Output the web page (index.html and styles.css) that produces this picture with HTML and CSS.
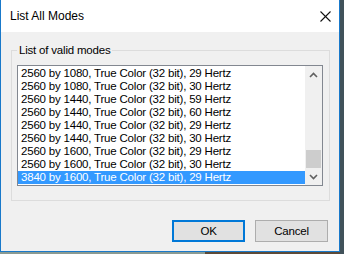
FILE: index.html
```html
<!DOCTYPE html>
<html lang="en">
<head>
  <meta charset="UTF-8">
  <meta name="viewport" content="width=device-width, initial-scale=1.0">
  <title>List All Modes</title>
  <link rel="stylesheet" href="styles.css">
</head>
<body>
  <div class="window">
    <div class="titlebar">
      <span class="title">List All Modes</span>
      <svg class="close" width="11" height="11" viewBox="0 0 11 11">
        <line x1="0.5" y1="0.5" x2="10.5" y2="10.5" stroke="#111" stroke-width="1.1"/>
        <line x1="10.5" y1="0.5" x2="0.5" y2="10.5" stroke="#111" stroke-width="1.1"/>
      </svg>
    </div>
    <div class="client">
      <fieldset class="group">
        <legend>List of valid modes</legend>
        <div class="listbox">
          <ul class="items">
            <li>2560 by 1080, True Color (32 bit), 29 Hertz</li>
            <li>2560 by 1080, True Color (32 bit), 30 Hertz</li>
            <li>2560 by 1440, True Color (32 bit), 59 Hertz</li>
            <li>2560 by 1440, True Color (32 bit), 60 Hertz</li>
            <li>2560 by 1440, True Color (32 bit), 29 Hertz</li>
            <li>2560 by 1440, True Color (32 bit), 30 Hertz</li>
            <li>2560 by 1600, True Color (32 bit), 29 Hertz</li>
            <li>2560 by 1600, True Color (32 bit), 30 Hertz</li>
            <li class="selected">3840 by 1600, True Color (32 bit), 29 Hertz</li>
          </ul>
          <div class="scrollbar">
            <div class="arrow">
              <svg width="9" height="6" viewBox="0 0 9 6"><polyline points="1,5 4.5,1.5 8,5" fill="none" stroke="#606060" stroke-width="1.6"/></svg>
            </div>
            <div class="track"><div class="thumb"></div></div>
            <div class="arrow">
              <svg width="9" height="6" viewBox="0 0 9 6"><polyline points="1,1 4.5,4.5 8,1" fill="none" stroke="#606060" stroke-width="1.6"/></svg>
            </div>
          </div>
        </div>
      </fieldset>
      <div class="buttons">
        <button class="btn default">OK</button>
        <button class="btn">Cancel</button>
      </div>
    </div>
  </div>
</body>
</html>
```
FILE: styles.css
```css
body { margin: 0; width: 344px; height: 254px; overflow: hidden; font-family: "Liberation Sans", Arial, sans-serif; font-size: 12px; color: #000; background: linear-gradient(to right, #8a9a92 0 205px, #5c4a38 205px 340px, #41525a 340px); }
.window { box-sizing: border-box; width: 340px; height: 252px; border: 1px solid #1979ca; border-top: none; background: #f0f0f0; display: flex; flex-direction: column; }
.titlebar { height: 32px; flex: none; background: #fff; display: flex; align-items: center; justify-content: space-between; padding: 0 8px 0 9px; }
.title { line-height: 14px; }
.client { flex: 1; padding: 10px 9px 9px 10px; display: flex; flex-direction: column; font-size: 11.5px; letter-spacing: -0.2px; }
.group { margin: 0; padding: 7px 6px 14px 5px; border: 1px solid #dcdcdc; min-width: 0; }
.group legend { padding: 0 2px; line-height: 16px; }
.listbox { height: 121px; box-sizing: border-box; border: 1px solid #828790; background: #fff; display: flex; }
.items { flex: 1; list-style: none; margin: 0; padding: 1px 0; }
.items li { height: 13px; line-height: 13px; padding-left: 3px; white-space: nowrap; overflow: hidden; }
.items li.selected { background: #3399ff; color: #fff; }
.scrollbar { width: 17px; background: #f0f0f0; display: flex; flex-direction: column; }
.arrow { height: 17px; display: flex; align-items: center; justify-content: center; }
.track { flex: 1; display: flex; flex-direction: column; justify-content: flex-end; }
.thumb { height: 18px; margin: 0 1px; background: #cdcdcd; }
.buttons { display: flex; justify-content: flex-end; gap: 10px; margin-top: 19px; padding-right: 2px; }
.btn { box-sizing: border-box; width: 73px; height: 22px; padding: 0; border: 1px solid #adadad; background: #e1e1e1; font: inherit; letter-spacing: inherit; color: #000; }
.btn.default { border: 2px solid #0078d7; }
```
